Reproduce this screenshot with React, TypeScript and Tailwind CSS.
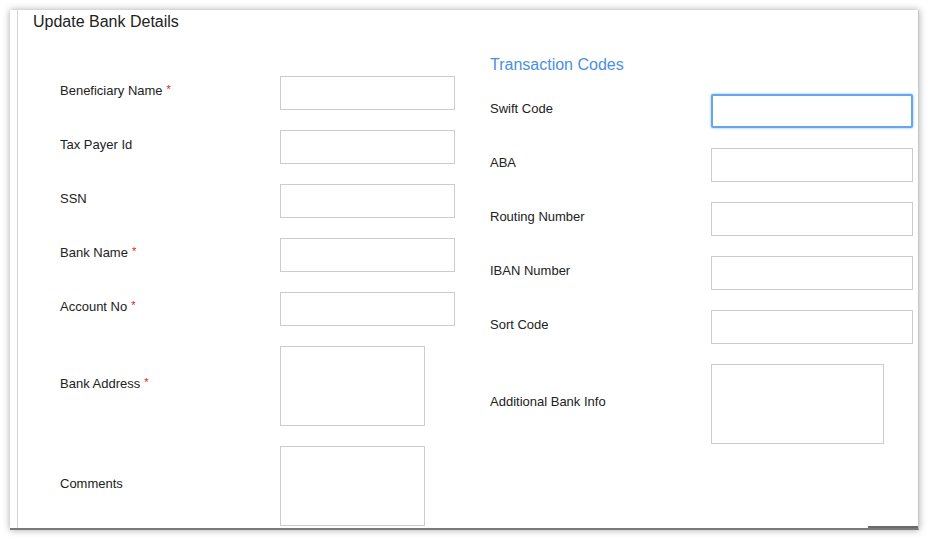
const left = [
  { label: "Beneficiary Name", req: true },
  { label: "Tax Payer Id" },
  { label: "SSN" },
  { label: "Bank Name", req: true },
  { label: "Account No", req: true },
];

const right = ["Swift Code", "ABA", "Routing Number", "IBAN Number", "Sort Code"];

function Label({ text, req }: { text: string; req?: boolean }) {
  return (
    <span className="relative -top-[3px] text-[13px] text-[#222]">
      {text}
      {req && <span className="relative -top-[2px] ml-[4px] text-[11px] text-[#e8130f]">*</span>}
    </span>
  );
}

export default function App() {
  return (
    <div className="h-[541px] w-[928px] bg-white pl-[10px] pt-[10px] font-['Liberation_Sans',Arial,sans-serif]">
      <div className="relative h-[520px] w-[909px] overflow-hidden border-r border-r-[#c8c8c8] border-b-2 border-b-[#7a7a7a] bg-white shadow-[0_0_7px_rgba(0,0,0,0.35)]">
        <div className="ml-[7px] h-full border-l border-l-[#d4d4d4]">
          <div className="pl-[15px] pt-[2px] text-[16px] leading-5 text-[#222]">Update Bank Details</div>

          <div className="flex">
            {/* left column */}
            <div className="ml-[42px] mt-[44px] w-[430px]">
              {left.map((f) => (
                <div key={f.label} className="mb-[20px] flex h-[34px] items-center">
                  <div className="w-[220px]">
                    <Label text={f.label} req={f.req} />
                  </div>
                  <div className="h-[34px] w-[175px] border border-[#cccccc] bg-white" />
                </div>
              ))}
              <div className="mb-[20px] flex h-[80px] items-center">
                <div className="w-[220px]">
                  <Label text="Bank Address" req />
                </div>
                <div className="h-[80px] w-[145px] border border-[#cccccc] bg-white" />
              </div>
              <div className="flex h-[80px] items-center">
                <div className="w-[220px]">
                  <Label text="Comments" />
                </div>
                <div className="h-[80px] w-[145px] border border-[#cccccc] bg-white" />
              </div>
            </div>

            {/* right column */}
            <div className="mt-[23px] flex-1">
              <div className="mb-[19px] text-[16px] leading-5 text-[#4a90e2]">Transaction Codes</div>
              {right.map((l, i) => (
                <div key={l} className="mb-[20px] flex h-[34px] items-center">
                  <div className="w-[221px]">
                    <Label text={l} />
                  </div>
                  {i === 0 ? (
                    <div className="h-[34px] w-[202px] rounded-[2px] border-2 border-[#68a6ea] bg-white shadow-[0_0_3px_#8ebdf2]" />
                  ) : (
                    <div className="h-[34px] w-[202px] border border-[#cccccc] bg-white" />
                  )}
                </div>
              ))}
              <div className="flex h-[80px] items-center">
                <div className="w-[221px]">
                  <Label text="Additional Bank Info" />
                </div>
                <div className="h-[80px] w-[173px] border border-[#cccccc] bg-white" />
              </div>
            </div>
          </div>
        </div>
        <div className="absolute bottom-0 right-0 h-[2px] w-[50px] bg-[#6a6a6a]" />
      </div>
    </div>
  );
}
